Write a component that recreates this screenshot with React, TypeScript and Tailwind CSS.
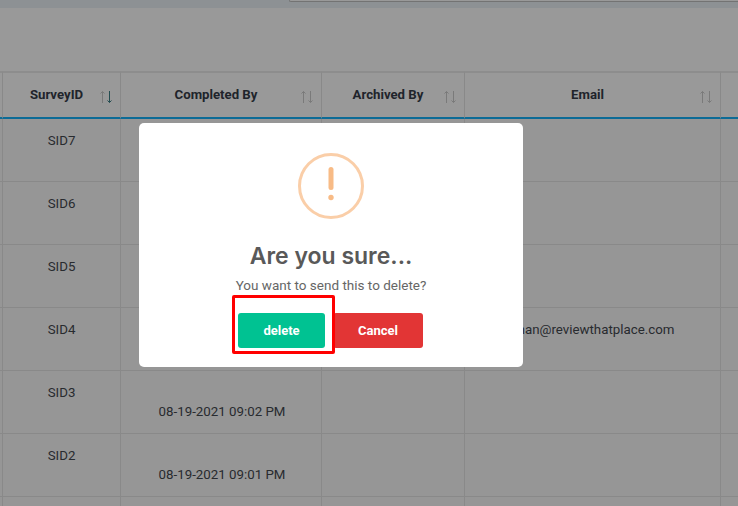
const rows = [
  { id: "SID7", date: "08-19-2021 09:06 PM", email: "" },
  { id: "SID6", date: "08-19-2021 09:05 PM", email: "" },
  { id: "SID5", date: "08-19-2021 09:04 PM", email: "" },
  { id: "SID4", date: "08-19-2021 09:03 PM", email: "human@reviewthatplace.com" },
  { id: "SID3", date: "08-19-2021 09:02 PM", email: "" },
  { id: "SID2", date: "08-19-2021 09:01 PM", email: "" },
  { id: "", date: "", email: "" },
];

function Sort({ active = false }: { active?: boolean }) {
  return (
    <svg className="absolute right-[7px] top-[17px]" width="14" height="14" viewBox="0 0 14 14" fill="none" strokeWidth="1">
      <path d="M3.5 13V1.5M1.5 3.5L3.5 1.5L5.5 3.5" stroke="#cccccc" />
      <path
        d="M10.5 1V12.5M8.5 10.5L10.5 12.5L12.5 10.5"
        stroke={active ? "#3b7f86" : "#cccccc"}
      />
    </svg>
  );
}

const th =
  "relative border-r border-b-2 border-t-2 border-r-[#e4e4e4] border-t-[#ececec] border-b-[#14b2fb] h-[48px] pr-[10px] text-center text-[13.2px] font-bold text-[#363c49]";
const td = "border-r border-b border-[#e4e4e4] bg-[#fbfbfb] h-[63px] align-top text-center text-[13.3px] text-[#44484f]";

export default function App() {
  return (
    <div className="relative h-[506px] w-[738px] overflow-hidden bg-white font-['Roboto',sans-serif]">
      <div className="flex h-[8px] justify-end bg-[#ebf2f7]">
        <div className="h-[2px] w-[449px] rounded-bl-[2px] border-b border-l border-[#c0c0c0] bg-white" />
      </div>
      <div className="h-[63px]" />
      <table className="w-[920px] table-fixed border-separate border-spacing-0">
        <colgroup>
          <col className="w-[3px]" />
          <col className="w-[118px]" />
          <col className="w-[201px]" />
          <col className="w-[143px]" />
          <col className="w-[256px]" />
          <col className="w-[199px]" />
        </colgroup>
        <thead>
          <tr>
            <th className={th} />
            <th className={th}>
              SurveyID
              <Sort active />
            </th>
            <th className={th}>
              Completed By
              <Sort />
            </th>
            <th className={th}>
              Archived By
              <Sort />
            </th>
            <th className={th}>
              Email
              <Sort />
            </th>
            <th className={th} />
          </tr>
        </thead>
        <tbody>
          {rows.map((r, i) => (
            <tr key={i}>
              <td className={td} />
              <td className={td}>
                <div className="pt-[14px] leading-[16px]">{r.id}</div>
              </td>
              <td className={td}>
                <div className="pl-[2px] pt-[33px] leading-[16px]">{r.date}</div>
              </td>
              <td className={td} />
              <td className={td}>
                <div className="pr-[12px] pt-[14px] leading-[16px]">{r.email}</div>
              </td>
              <td className={td} />
            </tr>
          ))}
        </tbody>
      </table>

      <div className="absolute inset-0 bg-black/40 pl-[139px] pt-[123px]">
        <div className="relative flex h-[244px] w-[384px] flex-col items-center rounded-[5px] bg-white pt-[30px]">
          <svg width="66" height="66" viewBox="0 0 66 66" fill="none">
            <circle cx="33" cy="33" r="31.5" stroke="#facea8" strokeWidth="3" />
            <rect x="30.5" y="14" width="5" height="23" rx="2.5" fill="#f8bb86" />
            <circle cx="33" cy="44.5" r="2.7" fill="#f8bb86" />
          </svg>
          <h2 className="mt-[19px] text-[23px] font-semibold leading-[36px] text-[#595959] font-['Inter',sans-serif]">
            Are you sure...
          </h2>
          <p className="mt-[1px] text-[13.5px] leading-[20px] text-[#666666]">You want to send this to delete?</p>
          <div className="mt-[18px] flex gap-[8px] pr-[1px]">
            <button className="h-[35px] w-[87px] rounded-[3px] bg-[#00c292] text-[13px] font-bold text-white">
              delete
            </button>
            <button className="h-[35px] w-[90px] rounded-[3px] bg-[#e23535] text-[13px] font-bold text-white">
              Cancel
            </button>
          </div>
          <div className="absolute left-[93px] top-[172px] h-[59px] w-[103px] rounded-[2px] border-[3px] border-[#ff0000]" />
        </div>
      </div>
    </div>
  );
}
